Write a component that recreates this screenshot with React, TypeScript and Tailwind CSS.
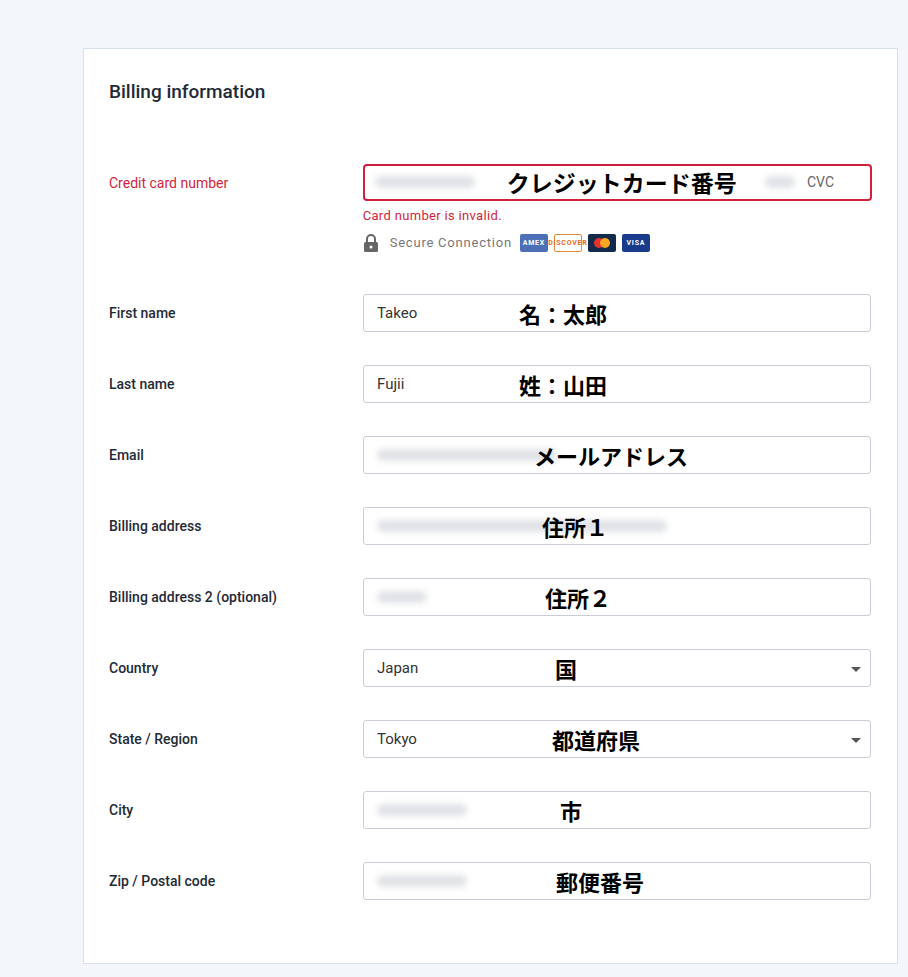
const jp = { fontFamily: '"Noto Sans CJK JP", "Liberation Sans", sans-serif' };

function Blur({ w, ml = 0 }: { w: number; ml?: number }) {
  return <span className="inline-block h-3 rounded-full bg-gray-300/70 blur-[3px]" style={{ width: w, marginLeft: ml }} />;
}

function Row({ label, value, jpText, blur, select, jpOffset = 0 }: { label: string; value?: string; jpText: string; blur?: number; select?: boolean; jpOffset?: number }) {
  return (
    <div className="flex items-center h-[71px]">
      <div className="w-[254px] text-[14px] font-medium text-[#1f2a37]">{label}</div>
      <div className="relative w-[508px] h-[38px] border border-[#c9ced6] rounded-[3px] bg-white flex items-center px-[13px] text-[15px] text-[#333]">
        {value && <span>{value}</span>}
        {blur && <Blur w={blur} />}
        <span className="absolute top-1/2 -translate-y-1/2 text-[22px] font-bold text-black" style={{ ...jp, left: 155 + jpOffset }}>{jpText}</span>
        {select && <span className="absolute right-[9px] top-[17px] border-l-[5px] border-r-[5px] border-t-[5px] border-l-transparent border-r-transparent border-t-[#555]" />}
      </div>
    </div>
  );
}

function Card({ bg, children, border }: { bg: string; children: React.ReactNode; border?: string }) {
  return <span className={`inline-flex items-center justify-center w-[28px] h-[18px] rounded-[2px] text-[7px] font-bold ${bg} ${border ?? ""}`}>{children}</span>;
}

export default function App() {
  return (
    <div className="min-h-[977px] bg-[#f3f6fa] pt-[48px] pl-[83px]" style={{ fontFamily: '"Roboto", "Liberation Sans", sans-serif' }}>
      <div className="w-[815px] h-[916px] bg-white border border-[#d6e0ec] px-[25px]">
        <h2 className="mt-[29px] text-[19px] font-medium text-[#1f2a37]">Billing information</h2>
        <div className="flex mt-[57px]">
          <div className="w-[254px] pt-[9px] text-[14px] text-[#d21f3c]">Credit card number</div>
          <div className="w-[510px]">
            <div className="relative h-[37px] border-2 border-[#d21f3c] rounded-[4px] flex items-center text-[14px] text-[#666]">
              <Blur w={100} ml={10} />
              <span className="absolute left-[142px] top-1/2 -translate-y-1/2 text-[23px] font-bold text-black" style={jp}>クレジットカード番号</span>
              <span className="ml-auto flex items-center gap-3 mr-[36px]"><Blur w={30} />CVC</span>
            </div>
            <div className="mt-[5px] text-[13px] text-[#d21f3c] tracking-wide">Card number is invalid.</div>
            <div className="mt-[8px] flex items-center gap-[6px] text-[13px] text-[#777] tracking-[0.06em]">
              <svg width="16" height="18" viewBox="0 0 16 18" className="mr-[5px]"><path d="M4 8V5a4 4 0 0 1 8 0v3" fill="none" stroke="#666" strokeWidth="2" /><rect x="1" y="8" width="14" height="10" rx="1.5" fill="#666" /><circle cx="8" cy="13" r="1.5" fill="#fff" /></svg>
              <span className="mr-[2px]">Secure Connection</span>
              <Card bg="bg-[#4d6fb5] text-white">AMEX</Card>
              <Card bg="bg-white text-[#e36a1c] text-[5px]" border="border border-[#e8883a]">DISCOVER</Card>
              <span className="relative w-[28px] h-[18px] rounded-[2px] bg-[#122b4a] flex items-center justify-center">
                <span className="w-[10px] h-[10px] rounded-full bg-[#e6312e]" />
                <span className="w-[10px] h-[10px] rounded-full bg-[#f5a623] -ml-[4px]" />
              </span>
              <Card bg="bg-[#1a3a8c] text-white">VISA</Card>
            </div>
          </div>
        </div>
        <div className="mt-[25px]">
          <Row label="First name" value="Takeo" jpText="名：太郎" />
          <Row label="Last name" value="Fujii" jpText="姓：山田" />
          <Row label="Email" blur={180} jpText="メールアドレス" jpOffset={15} />
          <Row label="Billing address" blur={290} jpText="住所１" jpOffset={23} />
          <Row label="Billing address 2 (optional)" blur={50} jpText="住所２" jpOffset={26} />
          <Row label="Country" value="Japan" jpText="国" jpOffset={36} select />
          <Row label="State / Region" value="Tokyo" jpText="都道府県" jpOffset={33} select />
          <Row label="City" blur={90} jpText="市" jpOffset={41} />
          <Row label="Zip / Postal code" blur={90} jpText="郵便番号" jpOffset={37} />
        </div>
      </div>
    </div>
  );
}
